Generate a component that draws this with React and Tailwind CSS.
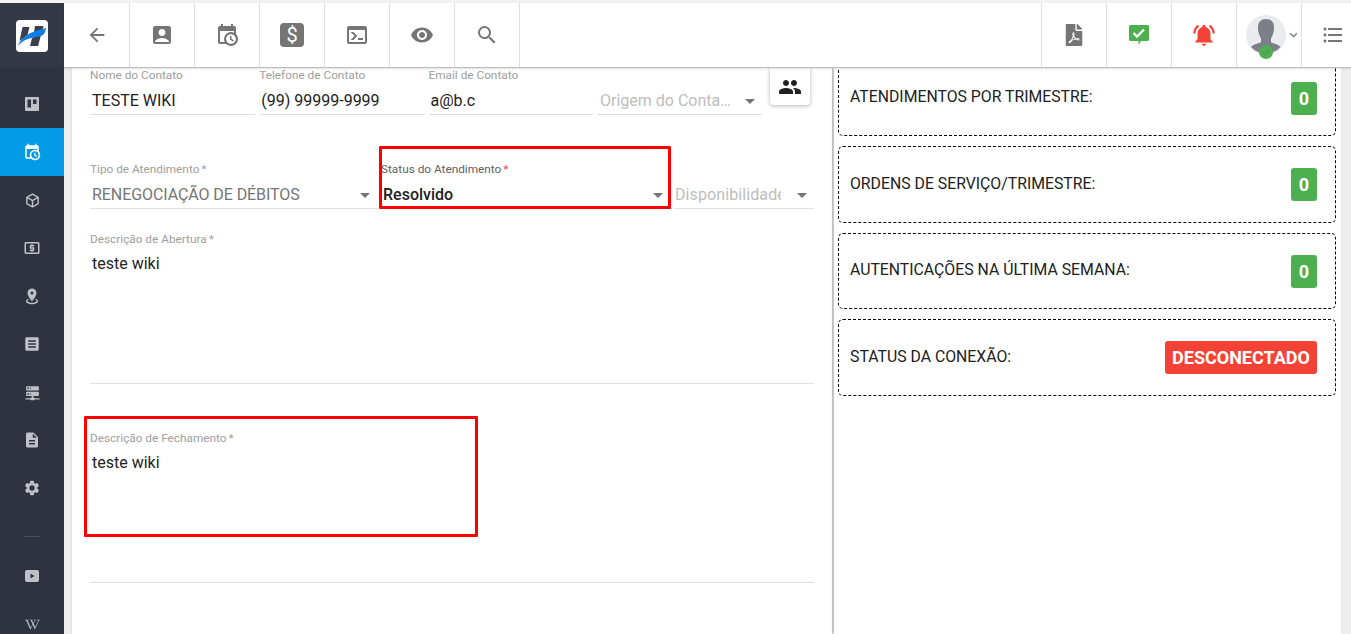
import { FaFilePdf, FaWikipediaW } from 'react-icons/fa';
import {
  MdAccountBox,
  MdArrowBack,
  MdDescription,
  MdExpandMore,
  MdFormatListBulleted,
  MdLocalAtm,
  MdNotificationsActive,
  MdPeople,
  MdSearch,
  MdSettings,
  MdVisibility,
} from 'react-icons/md';

const CALENDAR_CLOCK =
  'M15,13H16.5V15.82L18.94,17.23L18.19,18.53L15,16.69V13M19,8H5V19H9.67C9.24,18.09 9,17.07 9,16A7,7 0 0,1 16,9C17.07,9 18.09,9.24 19,9.67V8M5,21C3.89,21 3,20.1 3,19V5C3,3.89 3.89,3 5,3H6V1H8V3H16V1H18V3H19A2,2 0 0,1 21,5V11.1C22.24,12.36 23,14.09 23,16A7,7 0 0,1 16,23C14.09,23 12.36,22.24 11.1,21H5M16,11.15A4.85,4.85 0 0,0 11.15,16C11.15,18.68 13.32,20.85 16,20.85A4.85,4.85 0 0,0 20.85,16C20.85,13.32 18.68,11.15 16,11.15Z';
const CUBE =
  'M21,16.5C21,16.88 20.79,17.21 20.47,17.38L12.57,21.82C12.41,21.94 12.21,22 12,22C11.79,22 11.59,21.94 11.43,21.82L3.53,17.38C3.21,17.21 3,16.88 3,16.5V7.5C3,7.12 3.21,6.79 3.53,6.62L11.43,2.18C11.59,2.06 11.79,2 12,2C12.21,2 12.41,2.06 12.57,2.18L20.47,6.62C20.79,6.79 21,7.12 21,7.5V16.5M12,4.15L6.04,7.5L12,10.85L17.96,7.5L12,4.15M5,15.91L11,19.29V12.58L5,9.21V15.91M19,15.91V9.21L13,12.58V19.29L19,15.91Z';
const MARKER =
  'M12,2C15.31,2 18,4.66 18,7.95C18,12.41 12,19 12,19C12,19 6,12.41 6,7.95C6,4.66 8.69,2 12,2M12,6A2,2 0 0,0 10,8A2,2 0 0,0 12,10A2,2 0 0,0 14,8A2,2 0 0,0 12,6M20,19C20,21.21 16.42,23 12,23C7.58,23 4,21.21 4,19C4,17.71 5.22,16.56 7.11,15.83L7.75,16.74C6.67,17.19 6,17.81 6,18.5C6,19.88 8.69,21 12,21C15.31,21 18,19.88 18,18.5C18,17.81 17.33,17.19 16.25,16.74L16.89,15.83C18.78,16.56 20,17.71 20,19Z';
const CONSOLE =
  'M20,19V7H4V19H20M20,3A2,2 0 0,1 22,5V19A2,2 0 0,1 20,21H4A2,2 0 0,1 2,19V5C2,3.89 2.9,3 4,3H20M13,17V15H18V17H13M9.58,13L5.57,9H8.4L11.7,12.3C12.09,12.69 12.09,13.33 11.7,13.72L8.42,17H5.59L9.58,13Z';
const SERVER =
  'M13,19H14A1,1 0 0,1 15,20H22V22H15A1,1 0 0,1 14,23H10A1,1 0 0,1 9,22H2V20H9A1,1 0 0,1 10,19H11V17H4A1,1 0 0,1 3,16V12A1,1 0 0,1 4,11H20A1,1 0 0,1 21,12V16A1,1 0 0,1 20,17H13V19M4,3H20A1,1 0 0,1 21,4V8A1,1 0 0,1 20,9H4A1,1 0 0,1 3,8V4A1,1 0 0,1 4,3M9,7H10V5H9V7M9,15H10V13H9V15M5,5V7H7V5H5M5,13V15H7V13H5Z';
const TEXT_BOX =
  'M19 3H5c-1.1 0-2 .9-2 2v14c0 1.1.9 2 2 2h14c1.1 0 2-.9 2-2V5c0-1.1-.9-2-2-2zm-2 14H7v-2h10v2zm0-4H7v-2h10v2zm0-4H7V7h10v2z';

function PathIcon({ d, size = 24, className }) {
  return (
    <svg width={size} height={size} viewBox="0 0 24 24" fill="currentColor" className={className}>
      <path d={d} />
    </svg>
  );
}

function Logo() {
  return (
    <svg width="32" height="32" viewBox="0 0 32 32">
      <rect width="32" height="32" rx="4" fill="#fff" />
      <path d="M6.500 7h7l-2 8-8 6z" fill="#3a3f4b" />
      <path d="M19 6h8.500L22 26h-8l2-8 6.500-3-5 .5z" fill="#3a3f4b" />
      <path d="M2 26C5 17 13 12 30 8c-.5 4-2 7-5 8C16 18 9 18 2 26z" fill="#0d7ee8" />
    </svg>
  );
}

function BoardIcon() {
  return (
    <svg width="16" height="16" viewBox="0 0 16 16">
      <path
        fillRule="evenodd"
        d="M2 1h12a1 1 0 0 1 1 1v12a1 1 0 0 1-1 1H2a1 1 0 0 1-1-1V2a1 1 0 0 1 1-1zM3.500 3.500v8h3.500v-8zM9 3.500v4.500h3.500V3.500z"
        fill="#bfc1c6"
      />
    </svg>
  );
}

function YoutubeIcon() {
  return (
    <svg width="16" height="14" viewBox="0 0 16 14">
      <path fillRule="evenodd" d="M3 1h10a2 2 0 0 1 2 2v8a2 2 0 0 1-2 2H3a2 2 0 0 1-2-2V3a2 2 0 0 1 2-2zM6.500 4.500v5l4-2.500z" fill="#bfc1c6" />
    </svg>
  );
}

function SideItem({ children, active }) {
  return (
    <div className={`flex h-[48px] items-center justify-center ${active ? 'bg-[#039be5] text-white' : 'text-[#bfc1c6]'}`}>
      {children}
    </div>
  );
}

function Sidebar() {
  return (
    <aside className="flex h-full w-[64px] shrink-0 flex-col overflow-hidden bg-[#2f3340]">
      <div className="flex h-[65px] shrink-0 items-center justify-center bg-[#343845]">
        <Logo />
      </div>
      <div className="flex flex-col pt-[12px]">
        <SideItem><BoardIcon /></SideItem>
        <SideItem active><PathIcon d={CALENDAR_CLOCK} size={18} /></SideItem>
        <SideItem><PathIcon d={CUBE} size={17} /></SideItem>
        <SideItem><MdLocalAtm size={18} /></SideItem>
        <SideItem><PathIcon d={MARKER} size={18} /></SideItem>
        <SideItem><PathIcon d={TEXT_BOX} size={18} /></SideItem>
        <SideItem><PathIcon d={SERVER} size={17} /></SideItem>
        <SideItem><MdDescription size={18} /></SideItem>
        <SideItem><MdSettings size={18} /></SideItem>
        <div className="mx-[24px] mt-[24px] h-px shrink-0 bg-[#4a4e5a]" />
        <div className="mt-[15px]">
          <SideItem><YoutubeIcon /></SideItem>
        </div>
        <SideItem><FaWikipediaW size={15} /></SideItem>
      </div>
    </aside>
  );
}

function ToolCell({ children, className = 'w-[65px]' }) {
  return (
    <div className={`flex h-full shrink-0 items-center justify-center border-r border-[#e0e0e0] ${className}`}>
      {children}
    </div>
  );
}

function MessageCheck() {
  return (
    <svg width="22" height="22" viewBox="0 0 22 22">
      <path d="M2.500 1h17A1.500 1.500 0 0 1 21 2.500v13a1.500 1.500 0 0 1-1.500 1.500H13l-2.500 4V17h-8A1.500 1.500 0 0 1 1 15.500v-13A1.500 1.500 0 0 1 2.500 1z" fill="#4caf50" />
      <path d="M5.500 9l3.500 3.500 7-7" fill="none" stroke="#fff" strokeWidth="2.300" />
    </svg>
  );
}

function Avatar() {
  return (
    <svg width="42" height="46" viewBox="0 0 42 46">
      <circle cx="20" cy="20" r="20" fill="#e9ebef" />
      <path
        d="M20 4c5 0 8 3 8 8 0 2 0 3-.5 5-.5 2-1 4-2.500 6.500v3.500c3 2 8 2.500 9.500 5A20 20 0 0 1 5 32c1.500-2.500 6.500-3 10-5v-3.500C13.500 21 13 19 12.500 17 12 15 12 14 12 12c0-5 3-8 8-8z"
        fill="#7b8088"
      />
      <circle cx="20" cy="37" r="7" fill="#4caf50" />
      <path d="M16.500 37l2.500 2.500 4.500-5" fill="none" stroke="#5e8f60" strokeWidth="1.300" />
    </svg>
  );
}

function Toolbar() {
  return (
    <header className="relative z-10 flex h-[65px] shrink-0 items-center border-b border-[#bdbdbd] bg-white text-[#757575] shadow-[0_1px_2px_rgba(0,0,0,0.12)]">
      <ToolCell className="w-[66px]"><MdArrowBack size={22} /></ToolCell>
      <ToolCell><MdAccountBox size={24} /></ToolCell>
      <ToolCell><PathIcon d={CALENDAR_CLOCK} /></ToolCell>
      <ToolCell>
        <div className="flex h-[24px] w-[24px] items-center justify-center rounded-[4px] bg-[#757575] text-[20px] leading-none text-white">$</div>
      </ToolCell>
      <ToolCell><PathIcon d={CONSOLE} /></ToolCell>
      <ToolCell><MdVisibility size={24} /></ToolCell>
      <ToolCell><MdSearch size={24} /></ToolCell>
      <div className="flex-1" />
      <ToolCell className="w-[66px] border-l"><FaFilePdf size={22} /></ToolCell>
      <ToolCell><MessageCheck /></ToolCell>
      <ToolCell><MdNotificationsActive size={26} className="text-[#f44336]" /></ToolCell>
      <ToolCell className="w-[65px] justify-start pl-[9px]">
        <div className="pt-[6px]"><Avatar /></div>
        <MdExpandMore size={16} className="ml-[-2px] text-[#757575]" />
      </ToolCell>
      <div className="flex h-full w-[49px] items-center justify-end pr-[6px]">
        <MdFormatListBulleted size={24} />
      </div>
    </header>
  );
}

function Caret() {
  return (
    <svg width="24" height="24" viewBox="0 0 24 24" fill="#757575" className="mb-[4px] shrink-0">
      <path d="M7 10l5 5 5-5z" />
    </svg>
  );
}

function Field({ label, required, value, select, className = '', labelClass = 'text-[#9e9e9e]', valueClass = 'pl-[2px] text-[#212121]' }) {
  return (
    <div className={`shrink-0 border-b border-[#e0e0e0] pb-[1px] ${className}`}>
      <div className={`h-[14px] text-[11.8px] leading-[14px] ${labelClass}`}>
        {label}
        {required}
      </div>
      <div className="mt-[7px] flex h-[24px] items-start">
        <div className={`min-w-0 flex-1 text-[16px] leading-[24px] whitespace-nowrap ${valueClass}`}>
          {value}
        </div>
        {select && <Caret />}
      </div>
    </div>
  );
}

function FormPanel() {
  return (
    <section className="h-full w-[760px] shrink-0 bg-white px-[18px] shadow-[1px_0_3px_rgba(0,0,0,0.25)]">
      <div className="flex gap-[4px]">
        <Field label="Nome do Contato" value="TESTE WIKI" className="w-[165.250px]" />
        <Field label="Telefone de Contato" value="(99) 99999-9999" className="w-[165.250px]" />
        <Field label="Email de Contato" value="a@b.c" className="w-[164.500px]" />
        <Field label="&nbsp;" value="Origem do Contato" select className="w-[165px]" valueClass="truncate pr-[7px] pl-[3px] text-[#bdbdbd]" />
        <div className="ml-[4px] flex h-[37px] w-[40px] items-center justify-center rounded-b-[4px] bg-white text-[#212121] shadow-[0_1px_4px_rgba(0,0,0,0.3)]">
          <MdPeople size={24} />
        </div>
      </div>

      <div className="mt-[47px] flex gap-[4px]">
        <Field
          label="Tipo de Atendimento"
          required={<span className="ml-[2px]">*</span>}
          value="RENEGOCIAÇÃO DE DÉBITOS"
          select
          className="w-[287px]"
          valueClass="pl-[2px] tracking-[-0.08px] text-[#757575]"
        />
        <div className="relative w-[289px] shrink-0">
          <Field
            label="Status do Atendimento"
            required={<span className="ml-[2px] text-[#f44336]">*</span>}
            value="Resolvido"
            select
            className="w-full"
            labelClass="text-[#616161]"
            valueClass="pl-[2px] font-medium text-[#212121]"
          />
          <div className="absolute top-[-16px] right-[-1px] bottom-0 left-[-2px] rounded-[1px] border-[3px] border-[#ff0000]" />
        </div>
        <Field label="&nbsp;" value="Disponibilidade" select className="w-[140px]" valueClass="mr-[9px] overflow-hidden pl-[1px] tracking-[0.1px] text-[#bdbdbd]" />
      </div>

      <div className="mt-[23px] h-[152px] border-b border-[#e0e0e0]">
        <div className="text-[11.8px] leading-[14px] text-[#9e9e9e]">Descrição de Abertura<span className="ml-[2px]">*</span></div>
        <div className="mt-[6px] pl-[2px] text-[16px] leading-[24px] text-[#212121]">teste wiki</div>
      </div>

      <div className="relative mt-[47px] h-[152px] border-b border-[#e0e0e0]">
        <div className="text-[11.8px] leading-[14px] text-[#9e9e9e]">Descrição de Fechamento<span className="ml-[2px]">*</span></div>
        <div className="mt-[6px] pl-[2px] text-[16px] leading-[24px] text-[#212121]">teste wiki</div>
        <div className="absolute top-[-15px] left-[-6px] h-[121px] w-[394px] rounded-[1px] border-[3px] border-[#ff0000]" />
      </div>
    </section>
  );
}

function InfoCard({ label, children, className }) {
  return (
    <div className={`flex shrink-0 items-center justify-between rounded-[5px] border border-dashed border-black pr-[18px] pl-[11px] ${className}`}>
      <span className="mb-[2px] text-[15.800px] text-[#212121]">{label}</span>
      {children}
    </div>
  );
}

function CountBadge() {
  return (
    <div className="flex h-[33px] w-[26px] items-center justify-center rounded-[3px] bg-[#4caf50] text-[18px] font-bold text-white">0</div>
  );
}

function StatsPanel() {
  return (
    <section className="ml-[2px] h-full w-[507px] shrink-0 bg-white shadow-[-1px_0_3px_rgba(0,0,0,0.12)]">
      <div className="mt-[-8px] flex flex-col gap-[10px] pr-[5px] pl-[4px]">
        <InfoCard className="h-[76px]" label="ATENDIMENTOS POR TRIMESTRE:"><CountBadge /></InfoCard>
        <InfoCard className="h-[77px]" label="ORDENS DE SERVIÇO/TRIMESTRE:"><CountBadge /></InfoCard>
        <InfoCard className="h-[76px]" label="AUTENTICAÇÕES NA ÚLTIMA SEMANA:"><CountBadge /></InfoCard>
        <InfoCard className="h-[77px]" label="STATUS DA CONEXÃO:">
          <div className="flex h-[33px] w-[152px] items-center justify-center rounded-[3px] bg-[#f44336] text-[18px] font-bold text-white">DESCONECTADO</div>
        </InfoCard>
      </div>
    </section>
  );
}

export default function App() {
  return (
    <div className="flex h-screen flex-col overflow-hidden bg-[#eeeeee] font-['Roboto',sans-serif]">
      <div className="h-[3px] shrink-0 bg-[#f2f2f2]" />
      <div className="flex min-h-0 flex-1">
        <Sidebar />
        <div className="flex min-w-0 flex-1 flex-col">
          <Toolbar />
          <main className="flex min-h-0 flex-1 overflow-hidden pl-[8px]">
            <FormPanel />
            <StatsPanel />
          </main>
        </div>
      </div>
    </div>
  );
}
